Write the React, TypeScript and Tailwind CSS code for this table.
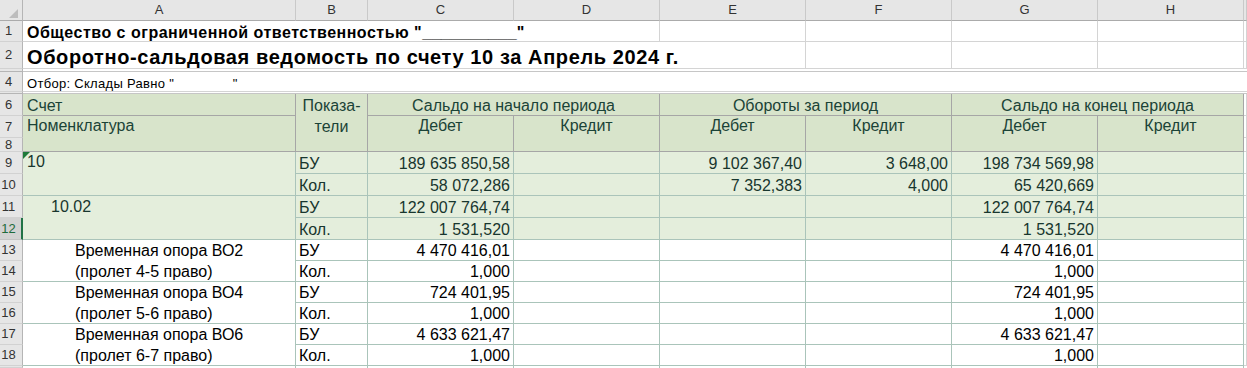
import React from 'react';

const FONT = "font-['Liberation_Sans',Arial,sans-serif]";

// column header / row header styling
const COLHDR =
  'bg-[#e6e6e6] text-[#333] text-[13px] border-r border-b border-r-[#c9c9c9] border-b-[#ababab] flex items-center justify-center';

const SHEET = 'bg-white border-r border-b border-[#d4d4d4]';
const HEAD = 'bg-[#d8e4cb] border-r border-b border-[#a6a6a6] text-[#1b4337] text-[16px] leading-[18px]';
const GREEN = 'bg-[#e4eedc] border-r border-b border-[#aac4ba] text-[#18362e] text-[16px] leading-[18px]';
const WHITE = 'bg-white border-r border-b border-[#aac4ba] text-black text-[16px] leading-[18px]';

function RowNum({ label, sel }: { label?: string; sel?: boolean }) {
  return (
    <div
      className={
        sel
          ? 'bg-[#d2d2d2] text-[#1e6b3c] text-[13px] border-b border-b-[#c4c4c4] border-r-2 border-r-[#217346] flex items-center justify-center pr-[4px]'
          : 'bg-[#e6e6e6] text-[#333] text-[13px] border-b border-b-[#d2d2d2] border-r border-r-[#b5b5b5] flex items-center justify-center pr-[5px]'
      }
    >
      {label}
    </div>
  );
}

function HiddenRow() {
  return (
    <>
      <div className="bg-[#e6e6e6] border-b border-r border-b-[#b5b5b5] border-r-[#b5b5b5]" />
      <div className="col-span-9 bg-white border-b border-[#c6c6c6]" />
    </>
  );
}

function Num({ v, tone }: { v?: string; tone: string }) {
  return <div className={`${tone} flex items-end justify-end pr-[3px] whitespace-nowrap`}>{v}</div>;
}

const items = [
  { n: 13, name: ['Временная опора ВО2', '(пролет 4-5 право)'], bu: '4 470 416,01', kol: '1,000' },
  { n: 15, name: ['Временная опора ВО4', '(пролет 5-6 право)'], bu: '724 401,95', kol: '1,000' },
  { n: 17, name: ['Временная опора ВО6', '(пролет 6-7 право)'], bu: '4 633 621,47', kol: '1,000' },
];

export default function App() {
  return (
    <div className={`${FONT} w-[1247px] h-[368px] overflow-hidden bg-white`}>
      <div className="grid h-full grid-cols-[23px_273px_72px_146px_146px_146px_146px_146px_146px_1fr] grid-rows-[21px_21px_27px_3px_20px_2px_22px_22px_14px_22px_22px_22px_22px_21px_21px_21px_21px_21px_21px_1fr]">
        {/* column letters */}
        <div className="bg-[#e6e6e6] border-r border-b border-r-[#b5b5b5] border-b-[#ababab] flex items-end justify-end pr-[4px] pb-[2px]">
          <svg width="9" height="9" viewBox="0 0 9 9">
            <polygon points="9,0 9,9 0,9" fill="#bdbdbd" />
          </svg>
        </div>
        {['A', 'B', 'C', 'D', 'E', 'F', 'G', 'H'].map((c) => (
          <div key={c} className={COLHDR}>
            {c}
          </div>
        ))}
        <div className={COLHDR} />

        {/* row 1 */}
        <RowNum label="1" />
        <div className={`${SHEET} col-span-4 flex items-end pl-[4px] text-[16px] leading-[17px] font-bold tracking-[0.5px] whitespace-pre`}>
          Общество с ограниченной ответственностью "
          <span className="text-[17px] tracking-normal">__________</span>"
        </div>
        <div className={SHEET} />
        <div className={SHEET} />
        <div className={SHEET} />
        <div className={SHEET} />
        <div className={SHEET} />

        {/* row 2 */}
        <RowNum label="2" />
        <div className={`${SHEET} col-span-5 flex items-end pl-[4px] text-[20px] leading-[22px] font-bold tracking-[0.6px] whitespace-nowrap`}>
          Оборотно-сальдовая ведомость по счету 10 за Апрель 2024 г.
        </div>
        <div className={SHEET} />
        <div className={SHEET} />
        <div className={SHEET} />
        <div className={SHEET} />

        <HiddenRow />

        {/* row 4 */}
        <RowNum label="4" />
        <div className="col-span-9 bg-white border-b border-[#d4d4d4] flex items-end pl-[4px] text-[13px] leading-[14px] tracking-[0.3px] whitespace-pre">
          {'Отбор: Склады Равно "               "'}
        </div>

        <HiddenRow />

        {/* rows 6-8: table header */}
        <RowNum label="6" />
        <div className={`${HEAD} flex items-end pl-[4px]`}>Счет</div>
        <div className={`${HEAD} row-span-3 text-center leading-[21px] pt-[1px]`}>
          Показа-
          <br />
          тели
        </div>
        <div className={`${HEAD} col-span-2 flex items-end justify-center`}>Сальдо на начало периода</div>
        <div className={`${HEAD} col-span-2 flex items-end justify-center`}>Обороты за период</div>
        <div className={`${HEAD} col-span-2 flex items-end justify-center`}>Сальдо на конец периода</div>
        <div className={SHEET} />

        <RowNum label="7" />
        <div className={`${HEAD} row-span-2 pl-[4px] pt-[1px]`}>Номенклатура</div>
        {['Дебет', 'Кредит', 'Дебет', 'Кредит', 'Дебет', 'Кредит'].map((t, i) => (
          <div key={i} className={`${HEAD} row-span-2 text-center pt-[1px]`}>
            {t}
          </div>
        ))}
        <div className={SHEET} />

        <RowNum label="8" />
        <div className={SHEET} />

        {/* rows 9-10: account 10 */}
        <RowNum label="9" />
        <div className={`${GREEN} row-span-2 relative pl-[4px] pt-[1px]`}>
          <svg className="absolute left-0 top-0" width="7" height="7" viewBox="0 0 7 7">
            <polygon points="0,0 7,0 0,7" fill="#1f7a3a" />
          </svg>
          10
        </div>
        <div className={`${GREEN} flex items-end pl-[3px]`}>БУ</div>
        <Num tone={GREEN} v="189 635 850,58" />
        <Num tone={GREEN} />
        <Num tone={GREEN} v="9 102 367,40" />
        <Num tone={GREEN} v="3 648,00" />
        <Num tone={GREEN} v="198 734 569,98" />
        <Num tone={GREEN} />
        <div className={SHEET} />

        <RowNum label="10" />
        <div className={`${GREEN} flex items-end pl-[3px]`}>Кол.</div>
        <Num tone={GREEN} v="58 072,286" />
        <Num tone={GREEN} />
        <Num tone={GREEN} v="7 352,383" />
        <Num tone={GREEN} v="4,000" />
        <Num tone={GREEN} v="65 420,669" />
        <Num tone={GREEN} />
        <div className={SHEET} />

        {/* rows 11-12: subaccount 10.02 */}
        <RowNum label="11" />
        <div className={`${GREEN} row-span-2 pl-[28px] pt-[2px]`}>10.02</div>
        <div className={`${GREEN} flex items-end pl-[3px]`}>БУ</div>
        <Num tone={GREEN} v="122 007 764,74" />
        <Num tone={GREEN} />
        <Num tone={GREEN} />
        <Num tone={GREEN} />
        <Num tone={GREEN} v="122 007 764,74" />
        <Num tone={GREEN} />
        <div className={SHEET} />

        <RowNum label="12" sel />
        <div className={`${GREEN} flex items-end pl-[3px]`}>Кол.</div>
        <Num tone={GREEN} v="1 531,520" />
        <Num tone={GREEN} />
        <Num tone={GREEN} />
        <Num tone={GREEN} />
        <Num tone={GREEN} v="1 531,520" />
        <Num tone={GREEN} />
        <div className={SHEET} />

        {/* rows 13-18: items */}
        {items.map((it) => (
          <React.Fragment key={it.n}>
            <RowNum label={String(it.n)} />
            <div className={`${WHITE} row-span-2 pl-[52px] leading-[21px] whitespace-nowrap`}>
              <div>{it.name[0]}</div>
              <div>{it.name[1]}</div>
            </div>
            <div className={`${WHITE} flex items-end pl-[3px]`}>БУ</div>
            <Num tone={WHITE} v={it.bu} />
            <Num tone={WHITE} />
            <Num tone={WHITE} />
            <Num tone={WHITE} />
            <Num tone={WHITE} v={it.bu} />
            <Num tone={WHITE} />
            <div className={SHEET} />

            <RowNum label={String(it.n + 1)} />
            <div className={`${WHITE} flex items-end pl-[3px]`}>Кол.</div>
            <Num tone={WHITE} v={it.kol} />
            <Num tone={WHITE} />
            <Num tone={WHITE} />
            <Num tone={WHITE} />
            <Num tone={WHITE} v={it.kol} />
            <Num tone={WHITE} />
            <div className={SHEET} />
          </React.Fragment>
        ))}

        {/* row 19 (cut off) */}
        <RowNum />
        <div className="border-r border-[#aac4ba]" />
        <div className="border-r border-[#aac4ba]" />
        <div className="border-r border-[#aac4ba]" />
        <div className="border-r border-[#aac4ba]" />
        <div className="border-r border-[#aac4ba]" />
        <div className="border-r border-[#aac4ba]" />
        <div className="border-r border-[#aac4ba]" />
        <div className="border-r border-[#aac4ba]" />
        <div />
      </div>
    </div>
  );
}
